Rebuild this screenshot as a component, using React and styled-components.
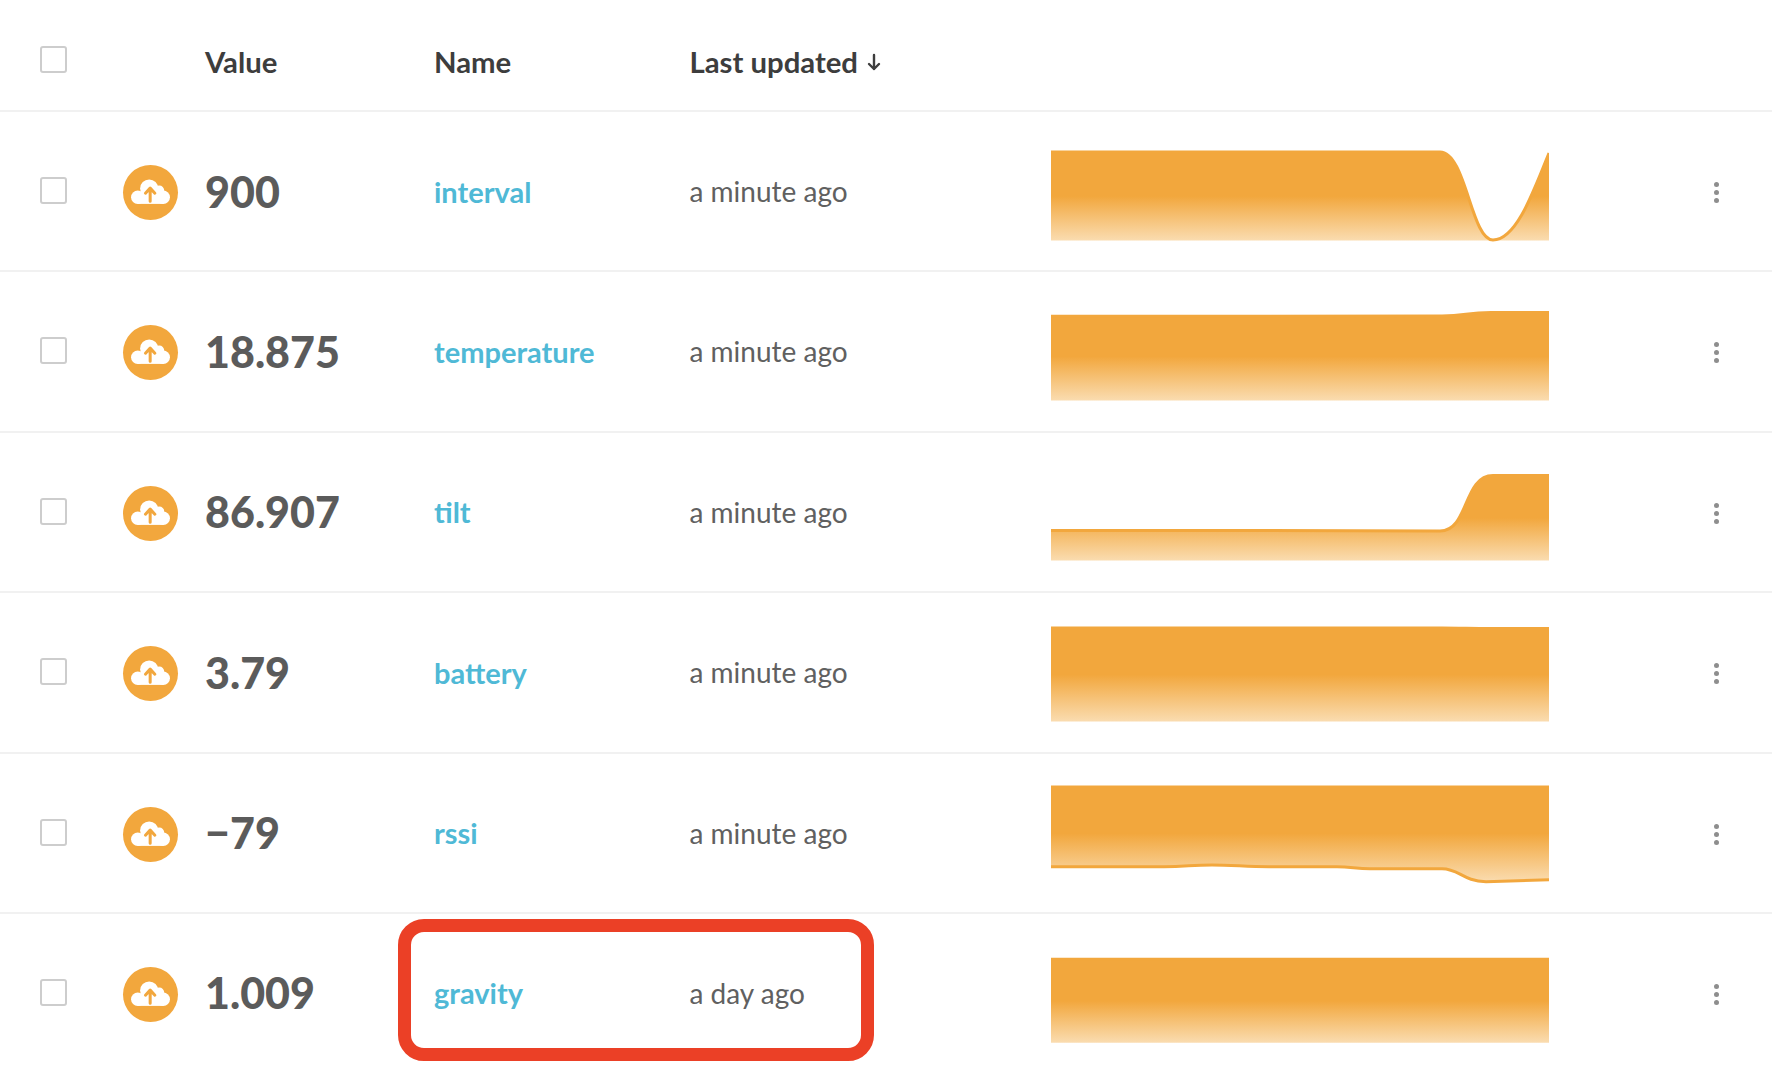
import React from 'react';
import styled, { createGlobalStyle } from 'styled-components';

const ORANGE = '#f2a73d';

const GlobalStyle = createGlobalStyle`
  html, body {
    margin: 0;
    padding: 0;
    background: #fff;
    overflow: hidden;
  }
  body {
    font-family: 'Lato', 'Open Sans', sans-serif;
  }
`;

const Table = styled.div`
  width: 1772px;
  min-height: 1080px;
`;

const columns = '122px 83px 229px 255.5px 361.5px 498px 1fr';

const HeaderRow = styled.div`
  display: grid;
  grid-template-columns: ${columns};
  align-items: center;
  height: 112px;
  padding-top: 9px;
  box-sizing: border-box;
  border-bottom: 2px solid #f1f1f1;
`;

const Row = styled.div`
  position: relative;
  display: grid;
  grid-template-columns: ${columns};
  align-items: center;
  height: 160.4px;
  padding-bottom: 6px;
  box-sizing: border-box;
  border-bottom: ${(p) => (p.$last ? 'none' : '2px solid #f1f1f1')};
`;

const CheckCell = styled.div`
  padding-left: 40px;
  display: flex;
  margin-bottom: ${(p) => (p.$raised ? '4px' : '0')};
`;

const Checkbox = styled.span`
  display: block;
  width: 27px;
  height: 27px;
  box-sizing: border-box;
  border: 2px solid #cdcdcd;
  border-radius: 3px;
  background: #fff;
`;

const HeadLabel = styled.div`
  font-size: 29.3px;
  font-weight: 700;
  color: #3d3d3d;
  margin-top: 4px;
  grid-column: ${(p) => p.$col};
  display: flex;
  align-items: center;
  gap: 9px;
  white-space: nowrap;
`;

const IconCircle = styled.div`
  width: 55px;
  height: 55px;
  margin-left: 0.5px;
  border-radius: 50%;
  background: ${ORANGE};
  display: flex;
`;

const Value = styled.div`
  font-size: 43px;
  font-weight: 900;
  color: #5b5b5b;
  white-space: nowrap;
  margin-bottom: 3px;
`;

const NameCell = styled.div`
  margin-bottom: 3px;
`;

const NameLink = styled.a`
  font-size: 29px;
  font-weight: 700;
  color: #4fb9d6;
`;

const Updated = styled.div`
  font-size: 28px;
  color: #606060;
  white-space: nowrap;
  margin-bottom: 3px;
`;

const ChartCell = styled.div`
  align-self: start;
  height: 160px;
  padding-top: 1px;
`;

const MenuCell = styled.div`
  display: flex;
  flex-direction: column;
  align-items: flex-end;
  gap: 3px;
  padding-right: 53px;
`;

const Dot = styled.span`
  width: 5px;
  height: 5px;
  border-radius: 50%;
  background: #8e8e8e;
`;

const Highlight = styled.div`
  position: absolute;
  left: 398px;
  top: 5px;
  width: 476px;
  height: 142px;
  box-sizing: border-box;
  border: 13px solid #eb4026;
  border-radius: 26px;
  pointer-events: none;
`;

const rows = [
  {
    value: '900',
    name: 'interval',
    updated: 'a minute ago',
    line: 'M0 39 L389 39 C415 39 420 127 442 127 C465 127 482 80 498 40',
    close: 'L498 127.5 L0 127.5 Z',
  },
  {
    value: '18.875',
    name: 'temperature',
    updated: 'a minute ago',
    line: 'M0 43.3 L391 43 C415 43 415 39.5 440 39.5 L498 39.5',
    close: 'L498 127.5 L0 127.5 Z',
  },
  {
    value: '86.907',
    name: 'tilt',
    updated: 'a minute ago',
    line: 'M0 96.5 L190 96.5 L389 97 C418 97 412 41.5 442 41.5 L498 41.5',
    close: 'L498 126.5 L0 126.5 Z',
  },
  {
    value: '3.79',
    name: 'battery',
    updated: 'a minute ago',
    line: 'M0 34 L391 34 C410 34 420 34.5 440 34.5 L498 34.5',
    close: 'L498 127.5 L0 127.5 Z',
  },
  {
    value: '\u221279',
    name: 'rssi',
    updated: 'a minute ago',
    line: 'M0 111.7 L113 111.7 C135 111.7 140 110 161 110 C182 110 195 111.7 218 111.7 L286 111.7 C300 111.7 305 113.7 319 113.7 L391 113.7 C408 113.7 412 126.3 435 126.7 L498 124.7',
    close: 'L498 30.4 L0 30.4 Z',
  },
  {
    value: '1.009',
    name: 'gravity',
    updated: 'a day ago',
    line: 'M0 44.3 L498 44.3',
    close: 'L498 127.7 L0 127.7 Z',
  },
];

const CloudIcon = () => (
  <svg width="55" height="55" viewBox="0 0 164 164">
    <g fill="#fff">
      <circle cx="44" cy="96" r="20" />
      <circle cx="78" cy="70" r="27" />
      <circle cx="108" cy="76" r="15" />
      <circle cx="120" cy="96" r="20" />
      <rect x="44" y="84" width="76" height="32" />
    </g>
    <path
      d="M81 108 V70 M67 84 L81 69 L95 84"
      fill="none"
      stroke={ORANGE}
      strokeWidth="9"
      strokeLinecap="round"
      strokeLinejoin="round"
    />
  </svg>
);

const SortArrow = () => (
  <svg width="14" height="18" viewBox="0 0 14 18">
    <path
      d="M7 2 V16 M2 11 L7 16 L12 11"
      fill="none"
      stroke="#3d3d3d"
      strokeWidth="2.4"
      strokeLinecap="round"
      strokeLinejoin="round"
    />
  </svg>
);

const Sparkline = ({ id, line, close }) => (
  <svg width="498" height="160" viewBox="0 0 498 160" style={{ display: 'block' }}>
    <defs>
      <linearGradient id={id} x1="0" y1="0" x2="0" y2="1">
        <stop offset="0.5" stopColor={ORANGE} />
        <stop offset="1" stopColor="#fadcb0" />
      </linearGradient>
    </defs>
    <path d={`${line} ${close}`} fill={`url(#${id})`} />
    <path d={line} fill="none" stroke={ORANGE} strokeWidth="3" />
  </svg>
);

const App = () => (
  <>
    <GlobalStyle />
    <Table>
      <HeaderRow>
        <CheckCell>
          <Checkbox />
        </CheckCell>
        <HeadLabel $col={3}>Value</HeadLabel>
        <HeadLabel $col={4}>Name</HeadLabel>
        <HeadLabel $col={5}>
          Last updated <SortArrow />
        </HeadLabel>
      </HeaderRow>
      {rows.map((row, i) => (
        <Row key={row.name} $last={i === rows.length - 1}>
          <CheckCell $raised>
            <Checkbox />
          </CheckCell>
          <IconCircle>
            <CloudIcon />
          </IconCircle>
          <Value>{row.value}</Value>
          <NameCell>
            <NameLink>{row.name}</NameLink>
          </NameCell>
          <Updated>{row.updated}</Updated>
          <ChartCell>
            <Sparkline id={`spark-${i}`} line={row.line} close={row.close} />
          </ChartCell>
          <MenuCell>
            <Dot />
            <Dot />
            <Dot />
          </MenuCell>
          {row.name === 'gravity' && <Highlight />}
        </Row>
      ))}
    </Table>
  </>
);

export default App;
